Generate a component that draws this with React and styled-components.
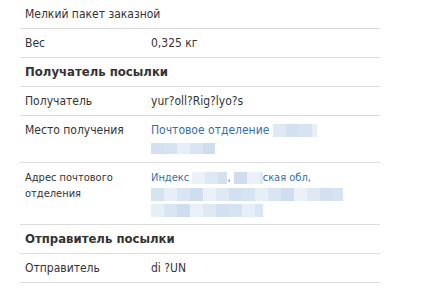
import React from "react";
import styled, { createGlobalStyle } from "styled-components";

const GlobalStyle = createGlobalStyle`
  html, body {
    margin: 0;
    padding: 0;
    background: #fff;
  }
  body {
    font-family: "DejaVu Sans Condensed", "DejaVu Sans", Tahoma, sans-serif;
    font-size: 12px;
    color: #333;
  }
`;

const blues = ["#d6e3f1", "#dfe9f4", "#cfdeee", "#e6eef7", "#d2e0ef", "#ebf1f8", "#d9e5f2"];

function Mosaic({ width, height = 13, seed = 0 }) {
  const cells = Math.ceil(width / 13);
  return (
    <Blur style={{ width, height }}>
      {Array.from({ length: cells }).map((_, i) => (
        <Cell key={i} style={{ background: blues[(i * 3 + seed) % blues.length] }} />
      ))}
    </Blur>
  );
}

export default function App() {
  return (
    <>
      <GlobalStyle />
      <Page>
        <Table>
          <Row>
            <Single>Мелкий пакет заказной</Single>
          </Row>
          <Row>
            <Label>Вес</Label>
            <Value>0,325 кг</Value>
          </Row>
          <Row>
            <Heading>Получатель посылки</Heading>
          </Row>
          <Row>
            <Label>Получатель</Label>
            <Value>yur?oll?Rig?lyo?s</Value>
          </Row>
          <Row>
            <Label>Место получения</Label>
            <Value>
              <Link>
                Почтовое отделение <Mosaic width={44} seed={1} />
                <br />
                <Mosaic width={64} height={11} seed={4} />
              </Link>
            </Value>
          </Row>
          <Row $small>
            <Label $small>Адрес почтового отделения</Label>
            <Value $small>
              <Link>
                Индекс <Mosaic width={35} height={12} seed={5} />,{" "}
                <Mosaic width={29} height={12} seed={2} />
                ская обл,
                <br />
                <Mosaic width={192} height={13} seed={0} />
                <br />
                <Mosaic width={112} height={13} seed={3} />
              </Link>
            </Value>
          </Row>
          <Row>
            <Heading>Отправитель посылки</Heading>
          </Row>
          <Row>
            <Label>Отправитель</Label>
            <Value>di ?UN</Value>
          </Row>
        </Table>
      </Page>
    </>
  );
}

const Page = styled.div`
  padding-left: 20px;
  width: 436px;
  height: 286px;
  box-sizing: border-box;
  overflow: hidden;
`;

const Table = styled.div`
  width: 360px;
`;

const Row = styled.div`
  display: grid;
  grid-template-columns: 131px 1fr;
  padding: ${(p) => (p.$small ? "7px 0 6px" : "5px 0")};
  border-bottom: 1px solid #dcdcdc;
  line-height: 18px;
`;

const Single = styled.div`
  grid-column: 1 / 3;
  padding-left: 5px;
`;

const Heading = styled.div`
  grid-column: 1 / 3;
  padding-left: 5px;
  font-weight: bold;
  font-size: 13px;
`;

const Label = styled.div`
  padding-left: 5px;
  font-size: ${(p) => (p.$small ? "11px" : "12px")};
  line-height: ${(p) => (p.$small ? "16px" : "18px")};
`;

const Value = styled.div`
  font-size: ${(p) => (p.$small ? "11px" : "12px")};
  line-height: ${(p) => (p.$small ? "16px" : "18px")};
`;

const Link = styled.span`
  color: #3a6ea5;
`;

const Blur = styled.span`
  display: inline-flex;
  vertical-align: middle;
  overflow: hidden;
`;

const Cell = styled.span`
  flex: 0 0 13px;
  height: 100%;
`;
